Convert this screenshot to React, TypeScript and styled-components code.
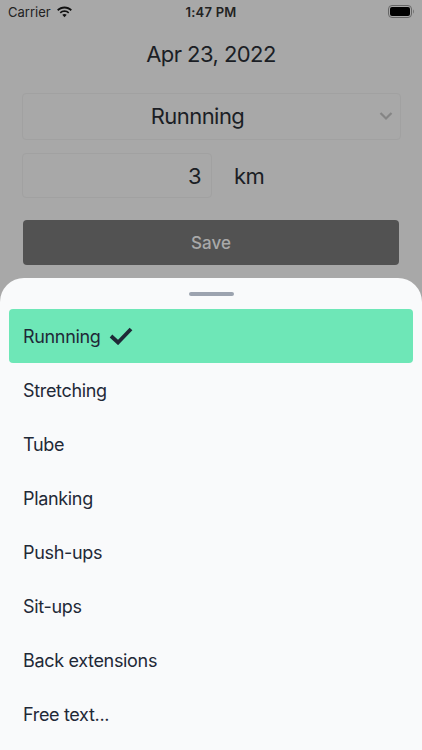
import React from "react";
import styled, { createGlobalStyle } from "styled-components";

const Global = createGlobalStyle`
  html, body { margin: 0; padding: 0; }
  body { font-family: Inter, "Liberation Sans", sans-serif; }
  * { box-sizing: border-box; }
`;

const Screen = styled.div`
  width: 422px;
  height: 750px;
  background: #a8a8a8;
  display: flex;
  flex-direction: column;
  overflow: hidden;
  color: #1b1e25;
`;

const StatusBar = styled.div`
  height: 24px;
  padding: 0 8px;
  display: grid;
  grid-template-columns: 1fr auto 1fr;
  align-items: center;
  font-size: 13px;
  color: #222;
`;

const StatusLeft = styled.div`
  display: flex;
  align-items: center;
  gap: 5px;
`;

const Clock = styled.div`
  font-weight: 600;
  font-size: 13px;
  letter-spacing: 0.25px;
`;

const StatusRight = styled.div`
  display: flex;
  justify-content: flex-end;
  padding-bottom: 1px;
`;

const Form = styled.div`
  flex: 1;
  display: flex;
  flex-direction: column;
  padding: 0 22px;
`;

const DateTitle = styled.div`
  margin-top: 14px;
  height: 32px;
  line-height: 32px;
  text-align: center;
  font-size: 22px;
  letter-spacing: -0.55px;
`;

const SelectBox = styled.div`
  margin-top: 23px;
  height: 47px;
  width: 379px;
  border: 1px solid #a1a1a1;
  border-radius: 4px;
  display: flex;
  align-items: center;
  justify-content: center;
  position: relative;
  font-size: 22px;
  letter-spacing: -0.55px;
  padding-right: 28px;
  padding-bottom: 2px;
`;

const Chevron = styled.svg`
  position: absolute;
  right: 7px;
  top: 17px;
`;

const DistanceRow = styled.div`
  margin-top: 13px;
  display: flex;
  align-items: center;
  gap: 22px;
`;

const NumberBox = styled.div`
  width: 190px;
  height: 45px;
  border: 1px solid #a1a1a1;
  border-radius: 4px;
  display: flex;
  align-items: center;
  justify-content: flex-end;
  padding-right: 10px;
  font-size: 22px;
  letter-spacing: -0.55px;
`;

const Unit = styled.div`
  font-size: 22px;
  letter-spacing: -0.55px;
`;

const SaveButton = styled.div`
  margin: 22px 1px 0;
  height: 45px;
  width: 376px;
  background: #525252;
  border-radius: 4px;
  display: flex;
  align-items: center;
  justify-content: center;
  color: #a9a9a9;
  font-size: 17px;
  font-weight: 500;
`;

const Sheet = styled.div`
  height: 472px;
  background: #f9fafb;
  border-radius: 24px 24px 0 0;
  padding: 14px 9px 0;
  display: flex;
  flex-direction: column;
`;

const Handle = styled.div`
  width: 45px;
  height: 4px;
  background: #9ca3af;
  border-radius: 2px;
  align-self: center;
  margin-bottom: 13px;
`;

const Option = styled.div<{ $active?: boolean }>`
  height: 54px;
  padding: 0 14px;
  display: flex;
  align-items: center;
  gap: 8px;
  font-size: 18px;
  letter-spacing: -0.33px;
  color: #1f2937;
  border-radius: 4px;
  background: ${(p) => (p.$active ? "#6ee7b7" : "transparent")};
`;

const options = ["Stretching", "Tube", "Planking", "Push-ups", "Sit-ups", "Back extensions", "Free text..."];

export default function App() {
  return (
    <Screen>
      <Global />
      <StatusBar>
        <StatusLeft>
          Carrier
          <svg width="17" height="12" viewBox="0 0 17 12" fill="#111">
            <path d="M8.5 2.4c2.4 0 4.6.9 6.2 2.5l1.2-1.3C13.9 1.6 11.3.5 8.5.5S3.1 1.6 1.1 3.6l1.2 1.3c1.6-1.6 3.8-2.5 6.2-2.5z" />
            <path d="M8.5 6.1c1.4 0 2.6.5 3.6 1.4l1.2-1.3C12 5 10.3 4.2 8.5 4.2S5 5 3.7 6.2l1.2 1.3c1-.9 2.2-1.4 3.6-1.4z" />
            <path d="M8.5 8c-.9 0-1.6.3-2.2.8l2.2 2.5 2.2-2.5C10.1 8.3 9.4 8 8.5 8z" />
          </svg>
        </StatusLeft>
        <Clock>1:47 PM</Clock>
        <StatusRight>
          <svg width="26" height="13" viewBox="0 0 26 13">
            <rect x="0.5" y="0.5" width="23" height="12" rx="3.5" fill="none" stroke="#666" />
            <rect x="2" y="2" width="20" height="9" rx="2" fill="#000" />
            <path d="M25 4.5v4c.7-.3 1-1.2 1-2s-.3-1.700-1-2z" fill="#777" />
          </svg>
        </StatusRight>
      </StatusBar>
      <Form>
        <DateTitle>Apr 23, 2022</DateTitle>
        <SelectBox>
          Runnning
          <Chevron width="14" height="10" viewBox="0 0 14 10" fill="none" stroke="#858585" strokeWidth="2.2">
            <path d="M1.5 2l5.5 5.5L12.5 2" />
          </Chevron>
        </SelectBox>
        <DistanceRow>
          <NumberBox>3</NumberBox>
          <Unit>km</Unit>
        </DistanceRow>
        <SaveButton>Save</SaveButton>
      </Form>
      <Sheet>
        <Handle />
        <Option $active>
          Runnning
          <svg width="24" height="18" viewBox="0 0 24 18" fill="none" stroke="#1f2937" strokeWidth="3.8">
            <path d="M2 9l7 6.5L22 2" />
          </svg>
        </Option>
        {options.map((o) => (
          <Option key={o}>{o}</Option>
        ))}
      </Sheet>
    </Screen>
  );
}
